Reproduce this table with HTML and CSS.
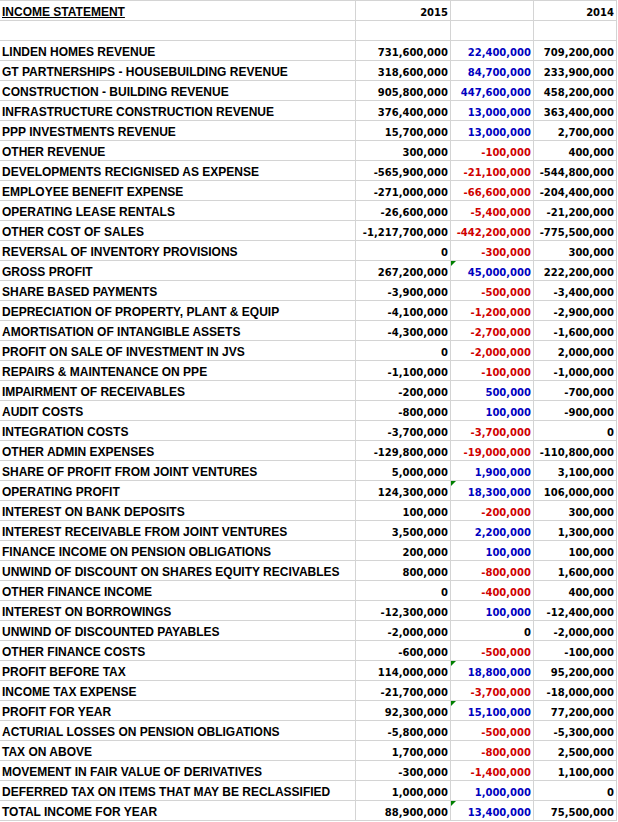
FILE: index.html
```html
<!DOCTYPE html>
<html>
<head>
<meta charset="utf-8">
<link rel="stylesheet" href="styles.css">
</head>
<body>
<div class="sheet">
  <div class="row"><div class="lbl"><u>INCOME STATEMENT</u></div><div class="num">2015</div><div class="num"></div><div class="num">2014</div></div>
  <div class="row"><div class="lbl"></div><div class="num"></div><div class="num"></div><div class="num"></div></div>
  <div class="row"><div class="lbl">LINDEN HOMES REVENUE</div><div class="num">731,600,000</div><div class="num pos">22,400,000</div><div class="num">709,200,000</div></div>
  <div class="row"><div class="lbl">GT PARTNERSHIPS - HOUSEBUILDING REVENUE</div><div class="num">318,600,000</div><div class="num pos">84,700,000</div><div class="num">233,900,000</div></div>
  <div class="row"><div class="lbl">CONSTRUCTION - BUILDING REVENUE</div><div class="num">905,800,000</div><div class="num pos">447,600,000</div><div class="num">458,200,000</div></div>
  <div class="row"><div class="lbl">INFRASTRUCTURE CONSTRUCTION REVENUE</div><div class="num">376,400,000</div><div class="num pos">13,000,000</div><div class="num">363,400,000</div></div>
  <div class="row"><div class="lbl">PPP INVESTMENTS REVENUE</div><div class="num">15,700,000</div><div class="num pos">13,000,000</div><div class="num">2,700,000</div></div>
  <div class="row"><div class="lbl">OTHER REVENUE</div><div class="num">300,000</div><div class="num neg">-100,000</div><div class="num">400,000</div></div>
  <div class="row"><div class="lbl">DEVELOPMENTS RECIGNISED AS EXPENSE</div><div class="num">-565,900,000</div><div class="num neg">-21,100,000</div><div class="num">-544,800,000</div></div>
  <div class="row"><div class="lbl">EMPLOYEE BENEFIT EXPENSE</div><div class="num">-271,000,000</div><div class="num neg">-66,600,000</div><div class="num">-204,400,000</div></div>
  <div class="row"><div class="lbl">OPERATING LEASE RENTALS</div><div class="num">-26,600,000</div><div class="num neg">-5,400,000</div><div class="num">-21,200,000</div></div>
  <div class="row"><div class="lbl">OTHER COST OF SALES</div><div class="num">-1,217,700,000</div><div class="num neg">-442,200,000</div><div class="num">-775,500,000</div></div>
  <div class="row"><div class="lbl">REVERSAL OF INVENTORY PROVISIONS</div><div class="num">0</div><div class="num neg">-300,000</div><div class="num">300,000</div></div>
  <div class="row"><div class="lbl">GROSS PROFIT</div><div class="num">267,200,000</div><div class="num pos flag">45,000,000</div><div class="num">222,200,000</div></div>
  <div class="row"><div class="lbl">SHARE BASED PAYMENTS</div><div class="num">-3,900,000</div><div class="num neg">-500,000</div><div class="num">-3,400,000</div></div>
  <div class="row"><div class="lbl">DEPRECIATION OF PROPERTY, PLANT &amp; EQUIP</div><div class="num">-4,100,000</div><div class="num neg">-1,200,000</div><div class="num">-2,900,000</div></div>
  <div class="row"><div class="lbl">AMORTISATION OF INTANGIBLE ASSETS</div><div class="num">-4,300,000</div><div class="num neg">-2,700,000</div><div class="num">-1,600,000</div></div>
  <div class="row"><div class="lbl">PROFIT ON SALE OF INVESTMENT IN JVS</div><div class="num">0</div><div class="num neg">-2,000,000</div><div class="num">2,000,000</div></div>
  <div class="row"><div class="lbl">REPAIRS &amp; MAINTENANCE ON PPE</div><div class="num">-1,100,000</div><div class="num neg">-100,000</div><div class="num">-1,000,000</div></div>
  <div class="row"><div class="lbl">IMPAIRMENT OF RECEIVABLES</div><div class="num">-200,000</div><div class="num pos">500,000</div><div class="num">-700,000</div></div>
  <div class="row"><div class="lbl">AUDIT COSTS</div><div class="num">-800,000</div><div class="num pos">100,000</div><div class="num">-900,000</div></div>
  <div class="row"><div class="lbl">INTEGRATION COSTS</div><div class="num">-3,700,000</div><div class="num neg">-3,700,000</div><div class="num">0</div></div>
  <div class="row"><div class="lbl">OTHER ADMIN EXPENSES</div><div class="num">-129,800,000</div><div class="num neg">-19,000,000</div><div class="num">-110,800,000</div></div>
  <div class="row"><div class="lbl">SHARE OF PROFIT FROM JOINT VENTURES</div><div class="num">5,000,000</div><div class="num pos">1,900,000</div><div class="num">3,100,000</div></div>
  <div class="row"><div class="lbl">OPERATING PROFIT</div><div class="num">124,300,000</div><div class="num pos flag">18,300,000</div><div class="num">106,000,000</div></div>
  <div class="row"><div class="lbl">INTEREST ON BANK DEPOSITS</div><div class="num">100,000</div><div class="num neg">-200,000</div><div class="num">300,000</div></div>
  <div class="row"><div class="lbl">INTEREST RECEIVABLE FROM JOINT VENTURES</div><div class="num">3,500,000</div><div class="num pos">2,200,000</div><div class="num">1,300,000</div></div>
  <div class="row"><div class="lbl">FINANCE INCOME ON PENSION OBLIGATIONS</div><div class="num">200,000</div><div class="num pos">100,000</div><div class="num">100,000</div></div>
  <div class="row"><div class="lbl">UNWIND OF DISCOUNT ON SHARES EQUITY RECIVABLES</div><div class="num">800,000</div><div class="num neg">-800,000</div><div class="num">1,600,000</div></div>
  <div class="row"><div class="lbl">OTHER FINANCE INCOME</div><div class="num">0</div><div class="num neg">-400,000</div><div class="num">400,000</div></div>
  <div class="row"><div class="lbl">INTEREST ON BORROWINGS</div><div class="num">-12,300,000</div><div class="num pos">100,000</div><div class="num">-12,400,000</div></div>
  <div class="row"><div class="lbl">UNWIND OF DISCOUNTED PAYABLES</div><div class="num">-2,000,000</div><div class="num">0</div><div class="num">-2,000,000</div></div>
  <div class="row"><div class="lbl">OTHER FINANCE COSTS</div><div class="num">-600,000</div><div class="num neg">-500,000</div><div class="num">-100,000</div></div>
  <div class="row"><div class="lbl">PROFIT BEFORE TAX</div><div class="num">114,000,000</div><div class="num pos flag">18,800,000</div><div class="num">95,200,000</div></div>
  <div class="row"><div class="lbl">INCOME TAX EXPENSE</div><div class="num">-21,700,000</div><div class="num neg">-3,700,000</div><div class="num">-18,000,000</div></div>
  <div class="row"><div class="lbl">PROFIT FOR YEAR</div><div class="num">92,300,000</div><div class="num pos flag">15,100,000</div><div class="num">77,200,000</div></div>
  <div class="row"><div class="lbl">ACTURIAL LOSSES ON PENSION OBLIGATIONS</div><div class="num">-5,800,000</div><div class="num neg">-500,000</div><div class="num">-5,300,000</div></div>
  <div class="row"><div class="lbl">TAX ON ABOVE</div><div class="num">1,700,000</div><div class="num neg">-800,000</div><div class="num">2,500,000</div></div>
  <div class="row"><div class="lbl">MOVEMENT IN FAIR VALUE OF DERIVATIVES</div><div class="num">-300,000</div><div class="num neg">-1,400,000</div><div class="num">1,100,000</div></div>
  <div class="row"><div class="lbl">DEFERRED TAX ON ITEMS THAT MAY BE RECLASSIFIED</div><div class="num">1,000,000</div><div class="num pos">1,000,000</div><div class="num">0</div></div>
  <div class="row"><div class="lbl">TOTAL INCOME FOR YEAR</div><div class="num">88,900,000</div><div class="num pos flag">13,400,000</div><div class="num">75,500,000</div></div>
</div>
</body>
</html>
```

FILE: styles.css
```css
html, body {
  margin: 0;
  padding: 0;
  background: #ffffff;
}

.sheet {
  width: 617px;
  border-top: 1px solid #d4d4d4;
  color: #000000;
}

.row {
  display: grid;
  grid-template-columns: 356px 95px 83px 83px;
  height: 20px;
}

.row > div {
  box-sizing: border-box;
  height: 20px;
  border-bottom: 1px solid #d4d4d4;
  border-right: 1px solid #d4d4d4;
  white-space: nowrap;
  overflow: visible;
  padding-top: 2px;
  line-height: 19px;
}

.lbl {
  font-family: "Liberation Sans", Arial, sans-serif;
  font-weight: bold;
  font-size: 12px;
  padding-left: 2px;
}

.lbl u {
  text-decoration-thickness: 1px;
  text-underline-offset: 1px;
}

.num {
  font-family: "DejaVu Sans", sans-serif;
  font-weight: bold;
  font-size: 10px;
  text-align: right;
  padding-right: 2px;
  position: relative;
}

.pos {
  color: #0000c0;
}

.neg {
  color: #d00000;
}

.flag::before {
  content: "";
  position: absolute;
  top: 0;
  left: 0;
  width: 0;
  height: 0;
  border-top: 5px solid #008000;
  border-right: 5px solid transparent;
}
```
